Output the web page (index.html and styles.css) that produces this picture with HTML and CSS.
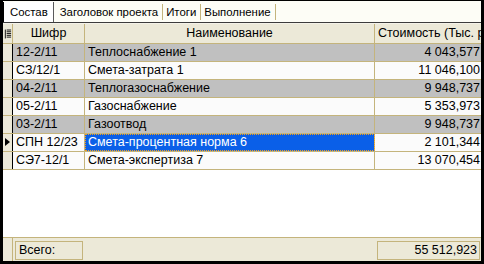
FILE: index.html
```html
<!DOCTYPE html>
<html lang="ru">
<head>
<meta charset="utf-8">
<link rel="stylesheet" href="styles.css">
</head>
<body>
<div class="window">
  <div class="tabs">
    <div class="tab active">Состав</div>
    <div class="tab">Заголовок проекта</div>
    <div class="tab">Итоги</div>
    <div class="tab">Выполнение</div>
  </div>
  <div class="grid">
    <div class="row head">
      <div class="c ind"><svg width="9" height="12" viewBox="0 0 9 12"><path d="M1.5 1v10" stroke="#000" stroke-width="1"/><path d="M3 1.5h5M3 3.5h5M3 5.5h5M3 7.5h5M3 9.5h5" stroke="#000" stroke-width="1"/></svg></div>
      <div class="c center">Шифр</div>
      <div class="c center">Наименование</div>
      <div class="c">Стоимость (Тыс. руб.)</div>
    </div>
    <div class="row grey"><div class="c ind"></div><div class="c">12-2/11</div><div class="c">Теплоснабжение 1</div><div class="c num">4 043,577</div></div>
    <div class="row"><div class="c ind"></div><div class="c">СЗ/12/1</div><div class="c">Смета-затрата 1</div><div class="c num">11 046,100</div></div>
    <div class="row grey"><div class="c ind"></div><div class="c">04-2/11</div><div class="c">Теплогазоснабжение</div><div class="c num">9 948,737</div></div>
    <div class="row"><div class="c ind"></div><div class="c">05-2/11</div><div class="c">Газоснабжение</div><div class="c num">5 353,973</div></div>
    <div class="row grey"><div class="c ind"></div><div class="c">03-2/11</div><div class="c">Газоотвод</div><div class="c num">9 948,737</div></div>
    <div class="row"><div class="c ind"><span class="marker"></span></div><div class="c">СПН 12/23</div><div class="c sel">Смета-процентная норма 6</div><div class="c num">2 101,344</div></div>
    <div class="row"><div class="c ind"></div><div class="c">СЭ7-12/1</div><div class="c">Смета-экспертиза 7</div><div class="c num">13 070,454</div></div>
    <div class="empty"></div>
  </div>
  <div class="footer">
    <div class="find"></div>
    <div class="box label">Всего:</div>
    <div class="spacer"></div>
    <div class="box total">55 512,923</div>
  </div>
</div>
</body>
</html>
```
FILE: styles.css
```css
html, body {
  margin: 0;
  padding: 0;
  background: #000;
}
body {
  font-family: "Liberation Sans", Arial, sans-serif;
  font-size: 12.5px;
  color: #000;
}
.window {
  width: 484px;
  height: 264px;
  box-sizing: border-box;
  padding: 1px 3px 3px 3px;
  display: flex;
  flex-direction: column;
  background: #000;
}
.tabs {
  height: 21px;
  background: #fdfdf6;
  display: flex;
  align-items: stretch;
  border-bottom: 1px solid #3c3c3c;
  font-size: 11.4px;
}
.tab {
  border-right: 1px solid #c4b47c;
  margin: 3px 0 2px 0;
  padding: 1px 4px 0 3px;
  line-height: 15px;
}
.tab.active {
  background: #fff;
  border-left: 1px solid #000;
  border-right: 1px solid #5a5a5a;
  margin: 1px 3px 0 0;
  padding: 3px 5px 0 6px;
}
.grid {
  flex: 1;
  display: flex;
  flex-direction: column;
  background: #fff;
}
.row {
  display: grid;
  grid-template-columns: 10px 72px 290px 1fr;
  height: 18px;
  box-sizing: border-box;
  border-bottom: 1px solid #c4b47c;
  background: #fbfbfb;
}
.row.grey { background: #c0c0c0; }
.row.head {
  height: 21px;
  background: #ece9d8;
  border-top: 1px solid #f4f2e8;
}
.c {
  box-sizing: border-box;
  border-right: 1px solid #c4b47c;
  padding: 0 3px;
  line-height: 17px;
  white-space: nowrap;
  overflow: hidden;
}
.c:last-child { border-right: 0; }
.head .c { line-height: 19px; }
.c.center { text-align: center; }
.c.num { text-align: right; padding-right: 1px; }
.c.ind {
  background: #ece9d8;
  border-right: 1px solid #000;
  padding: 0;
  position: relative;
}
.head .c.ind {
  border-right: 1px solid #c4b47c;
  display: flex;
  align-items: center;
  justify-content: flex-start;
  padding-left: 1px;
}
.marker {
  position: absolute;
  left: 2px;
  top: 4px;
  width: 0;
  height: 0;
  border-top: 4px solid transparent;
  border-bottom: 4px solid transparent;
  border-left: 5px solid #000;
}
.c.sel {
  background: #0a5fe8;
  color: #fff;
  outline: 1px dotted #f0a020;
  outline-offset: -1px;
}
.empty { flex: 1; background: #fff; }
.footer {
  height: 23px;
  background: #ece9d8;
  border-top: 1px solid #c4b47c;
  display: flex;
  align-items: flex-start;
}
.find {
  width: 10px;
  height: 100%;
  box-sizing: border-box;
  border-right: 1px solid #c4b47c;
}
.box {
  margin-top: 3px;
  height: 19px;
  box-sizing: border-box;
  border: 1px solid #c4b47c;
  line-height: 17px;
}
.label {
  margin-left: 2px;
  width: 68px;
  padding-left: 3px;
}
.spacer { flex: 1; }
.total {
  width: 103px;
  margin-right: 1px;
  text-align: right;
  padding-right: 2px;
}
```
